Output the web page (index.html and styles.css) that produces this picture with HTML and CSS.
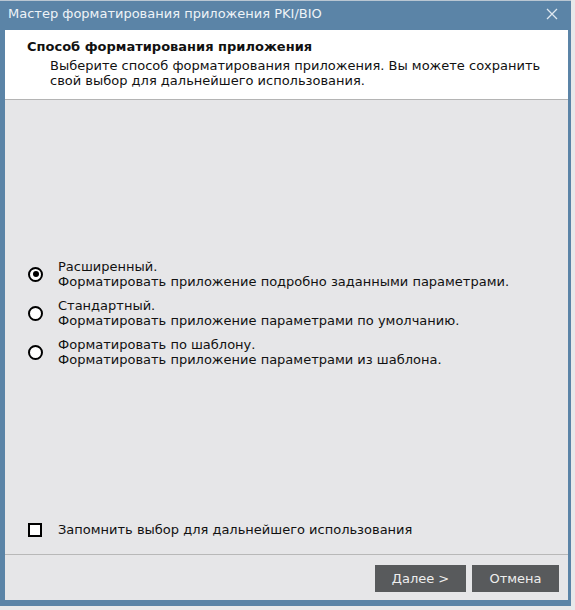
FILE: index.html
```html
<!DOCTYPE html>
<html lang="ru">
<head>
<meta charset="utf-8">
<title>Мастер форматирования приложения PKI/BIO</title>
<link rel="stylesheet" href="styles.css">
</head>
<body>
<div class="page">
  <div class="window">
    <div class="titlebar">
      <span class="title">Мастер форматирования приложения PKI/BIO</span>
      <svg class="close" width="12" height="12" viewBox="0 0 12 12"><path d="M1 1L11 11M11 1L1 11" stroke="#dfe8f0" stroke-width="1.3" fill="none"/></svg>
    </div>
    <div class="header">
      <div class="h-title">Способ форматирования приложения</div>
      <div class="h-desc">Выберите способ форматирования приложения. Вы можете сохранить свой выбор для дальнейшего использования.</div>
    </div>
    <div class="body">
      <div class="options">
        <div class="option">
          <span class="radio checked"></span>
          <div class="opt-text">Расширенный.<br>Форматировать приложение подробно заданными параметрами.</div>
        </div>
        <div class="option">
          <span class="radio"></span>
          <div class="opt-text">Стандартный.<br>Форматировать приложение параметрами по умолчанию.</div>
        </div>
        <div class="option">
          <span class="radio"></span>
          <div class="opt-text">Форматировать по шаблону.<br>Форматировать приложение параметрами из шаблона.</div>
        </div>
      </div>
      <div class="remember">
        <span class="checkbox"></span>
        <span class="rem-text">Запомнить выбор для дальнейшего использования</span>
      </div>
    </div>
    <div class="footer">
      <button class="btn btn-next">Далее &gt;</button>
      <button class="btn btn-cancel">Отмена</button>
    </div>
  </div>
</div>
</body>
</html>
```
FILE: styles.css
```css
html, body {
  margin: 0;
  padding: 0;
  background: #e8e9ea;
}
body {
  font-family: "DejaVu Sans", sans-serif;
  font-size: 13px;
  color: #111;
}
.page {
  width: 575px;
  height: 610px;
  overflow: hidden;
}
.window {
  width: 571px;
  height: 606px;
  box-sizing: border-box;
  background: #5b84a7;
  border-top: 1px solid #b9c6d2;
  padding: 0 3px 6px 5px;
  display: flex;
  flex-direction: column;
}
.titlebar {
  height: 29px;
  display: flex;
  align-items: center;
  justify-content: space-between;
  padding: 0 10px 0 3px;
  color: #eef3f7;
  font-size: 13px;
}
.title {
  position: relative;
  top: -2px;
}
.close {
  position: relative;
  top: -2px;
}
.header {
  background: #ffffff;
  height: 70px;
  box-sizing: border-box;
  padding: 9px 10px 0 22px;
  border-bottom: 1px solid #b4b4b4;
  line-height: 15px;
}
.h-title {
  font-weight: bold;
  margin-bottom: 4px;
}
.h-desc {
  padding-left: 23px;
}
.body {
  flex: 1;
  background: #e6e6e8;
  display: flex;
  flex-direction: column;
  justify-content: space-between;
  border-bottom: 1px solid #b8b8b8;
}
.options {
  padding-top: 159px;
  display: flex;
  flex-direction: column;
  gap: 9px;
}
.option {
  display: flex;
  align-items: center;
  padding-left: 23px;
  line-height: 15px;
}
.radio {
  width: 15px;
  height: 15px;
  box-sizing: border-box;
  border: 2px solid #000;
  border-radius: 50%;
  background: #fff;
  margin-right: 15px;
  position: relative;
  flex: none;
}
.radio.checked::after {
  content: "";
  position: absolute;
  left: 2.5px;
  top: 2.5px;
  width: 6px;
  height: 6px;
  border-radius: 50%;
  background: #000;
}
.remember {
  display: flex;
  align-items: center;
  padding-left: 23px;
  margin-bottom: 17px;
}
.checkbox {
  width: 14px;
  height: 14px;
  box-sizing: border-box;
  border: 2px solid #000;
  background: #fff;
  margin-right: 16px;
  flex: none;
}
.footer {
  background: #e6e6e8;
  height: 45px;
  box-sizing: border-box;
  display: flex;
  justify-content: flex-end;
  align-items: flex-start;
  gap: 6px;
  padding: 10px 9px 0 0;
}
.btn {
  height: 27px;
  border: none;
  background: #585a5c;
  color: #eeeeee;
  font-family: "DejaVu Sans", sans-serif;
  font-size: 13px;
  padding: 0;
}
.btn-next { width: 91px; }
.btn-cancel { width: 87px; }
```
